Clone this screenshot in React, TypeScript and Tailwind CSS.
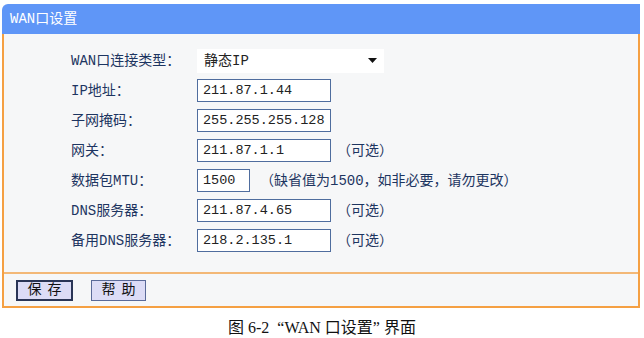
import React from "react";

const mono = { fontFamily: '"Liberation Mono", "Noto Sans CJK SC", monospace' };

function Row({ label, children }: { label: string; children: React.ReactNode }) {
  return (
    <div className="flex items-center h-[23px]">
      <div className="w-[126px] text-[14px] text-[#1d3561] leading-none">{label}</div>
      {children}
    </div>
  );
}

function Input({ value, w = "w-[134px]" }: { value: string; w?: string }) {
  return (
    <div className={`${w} h-[23px] border border-[#4f6d9e] bg-white flex items-center pl-[5px] text-[13.5px] text-[#222] leading-none whitespace-nowrap overflow-hidden`}>
      {value}
    </div>
  );
}

function Note({ text }: { text: string }) {
  return <span className="ml-[6px] text-[14px] text-[#1d3561] leading-none">{text}</span>;
}

export default function App() {
  return (
    <div className="w-[644px] h-[338px] bg-white relative" style={mono}>
      <div className="pt-[4px] pl-[2px] w-[640px]">
        <div className="h-[30px] bg-[#5f96f7] rounded-tl-[6px] flex items-center pl-[8px] text-white text-[14px]">
          WAN口设置
        </div>
        <div className="border-l-2 border-r-2 border-b-2 border-[#f5a043] bg-[#f6f7f8]">
          <div className="h-[238px] pt-[15px] pl-[67px] flex flex-col gap-[7px]">
            <Row label="WAN口连接类型：">
              <div className="w-[187px] h-[24px] bg-white flex items-center justify-between pl-[7px] pr-[7px] text-[14px] text-[#222] leading-none">
                <span>静态IP</span>
                <svg width="9" height="5" viewBox="0 0 9 5"><path d="M0 0 L9 0 L4.5 5 Z" fill="#111" /></svg>
              </div>
            </Row>
            <Row label="IP地址：">
              <Input value="211.87.1.44" />
            </Row>
            <Row label="子网掩码：">
              <Input value="255.255.255.128" />
            </Row>
            <Row label="网关：">
              <Input value="211.87.1.1" />
              <Note text="（可选）" />
            </Row>
            <Row label="数据包MTU：">
              <Input value="1500" w="w-[53px]" />
              <span className="ml-[10px] text-[14px] text-[#1d3561] leading-none">（缺省值为1500，如非必要，请勿更改）</span>
            </Row>
            <Row label="DNS服务器：">
              <Input value="211.87.4.65" />
              <Note text="（可选）" />
            </Row>
            <Row label="备用DNS服务器：">
              <Input value="218.2.135.1" />
              <Note text="（可选）" />
            </Row>
          </div>
          <div className="h-[34px] border-t-2 border-[#f3b877] flex items-center pl-[12px] gap-[18px]">
            <button className="w-[57px] h-[21px] bg-[#dcdcf6] border-2 border-[#2a3556] text-[14px] text-[#111] leading-none tracking-[6px] pl-[6px]">
              保存
            </button>
            <button className="w-[55px] h-[21px] bg-[#dcdcf6] border border-[#5a6a99] text-[14px] text-[#111] leading-none tracking-[6px] pl-[6px]">
              帮助
            </button>
          </div>
        </div>
      </div>
      <div
        className="mt-[8px] text-center text-[16px] text-[#111] whitespace-pre"
        style={{ fontFamily: '"Liberation Serif", "Noto Sans CJK SC", serif' }}
      >
        {"图 6-2  “WAN 口设置” 界面"}
      </div>
    </div>
  );
}
